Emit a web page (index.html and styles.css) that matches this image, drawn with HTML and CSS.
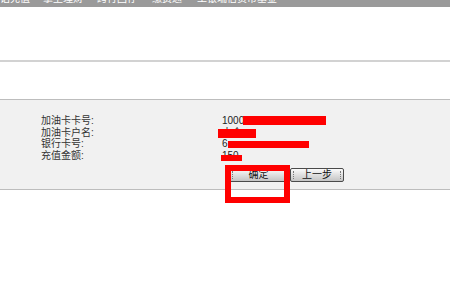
FILE: index.html
```html
<!DOCTYPE html>
<html lang="zh-CN">
<head>
    <meta charset="UTF-8">
    <title>加油卡充值</title>
    <link rel="stylesheet" href="styles.css">
</head>
<body>
    <div class="topnav">
        <div class="topnav-items">
            <span class="w30">话充值</span>
            <span class="w54">掌上理财</span>
            <span class="w55">跨行回存</span>
            <span class="w45">缴费通</span>
            <span>工银瑞信货币基金</span>
        </div>
    </div>
    <div class="spacer"></div>
    <div class="rule"></div>
    <div class="panel">
        <div class="form-table">
            <div class="label">加油卡卡号:</div>
            <div class="value">1000<span class="mask m1"></span></div>
            <div class="label">加油卡户名:</div>
            <div class="value">大众<span class="mask m2"></span></div>
            <div class="label">银行卡号:</div>
            <div class="value">6<span class="mask m3"></span></div>
            <div class="label">充值金额:</div>
            <div class="value">150<span class="mask m4"></span></div>
        </div>
        <div class="actions">
            <button type="button" class="btn btn-ok">确定</button>
            <button type="button" class="btn btn-back">上一步</button>
        </div>
    </div>
    <div class="highlight"></div>
</body>
</html>
```

FILE: styles.css
```css
body { position: relative; margin: 0; min-height: 300px; background: #fff; font-family: "Liberation Sans", "Noto Sans CJK SC", sans-serif; font-size: 10px; color: #222; }
.topnav { height: 7px; background: #9a9a9a; overflow: hidden; }
.topnav-items { display: flex; margin-top: -7px; line-height: 12px; color: #fff; white-space: nowrap; }
.topnav-items span { flex: none; }
.w30 { width: 43px; }
.w54 { width: 54px; }
.w55 { width: 55px; }
.w45 { width: 45px; }
.spacer { height: 53px; }
.rule { border-top: 2px solid #d2d2d2; margin-bottom: 37px; }
.panel { height: 89px; background: #f1f1f1; border-top: 1px solid #bdbdbd; border-bottom: 1px solid #bdbdbd; }
.form-table { display: grid; grid-template-columns: 181px 1fr; padding: 15px 0 0 41px; line-height: 11.7px; }
.label { color: #333; }
.value { position: relative; color: #222; }
.mask { position: absolute; background: #ff0000; }
.m1 { left: 21px; top: 1px; width: 83px; height: 9px; }
.m2 { left: -4px; top: 2px; width: 38px; height: 9px; }
.m3 { left: 6px; top: 3px; width: 81px; height: 7px; }
.m4 { left: -1px; top: 5px; width: 21px; height: 6px; }
.actions { display: flex; gap: 2px; padding: 6px 0 0 229px; }
.btn { position: relative; height: 14px; padding: 0; border: 1px solid #4a4a4a; border-radius: 2px; background: linear-gradient(#fbfbfb, #e2e2e2 45%, #c4c4c4); font-family: inherit; font-size: 10px; line-height: 12px; color: #111; }
.btn::before, .btn::after { content: ""; position: absolute; top: 2px; height: 8px; border-left: 1px dotted #7a7a7a; }
.btn::before { left: 2px; }
.btn::after { right: 2px; }
.btn-ok { width: 59px; }
.btn-back { width: 54px; }
.highlight { position: absolute; z-index: 2; left: 225px; top: 165px; width: 53px; height: 26px; border: 6px solid #ff0000; }
```
